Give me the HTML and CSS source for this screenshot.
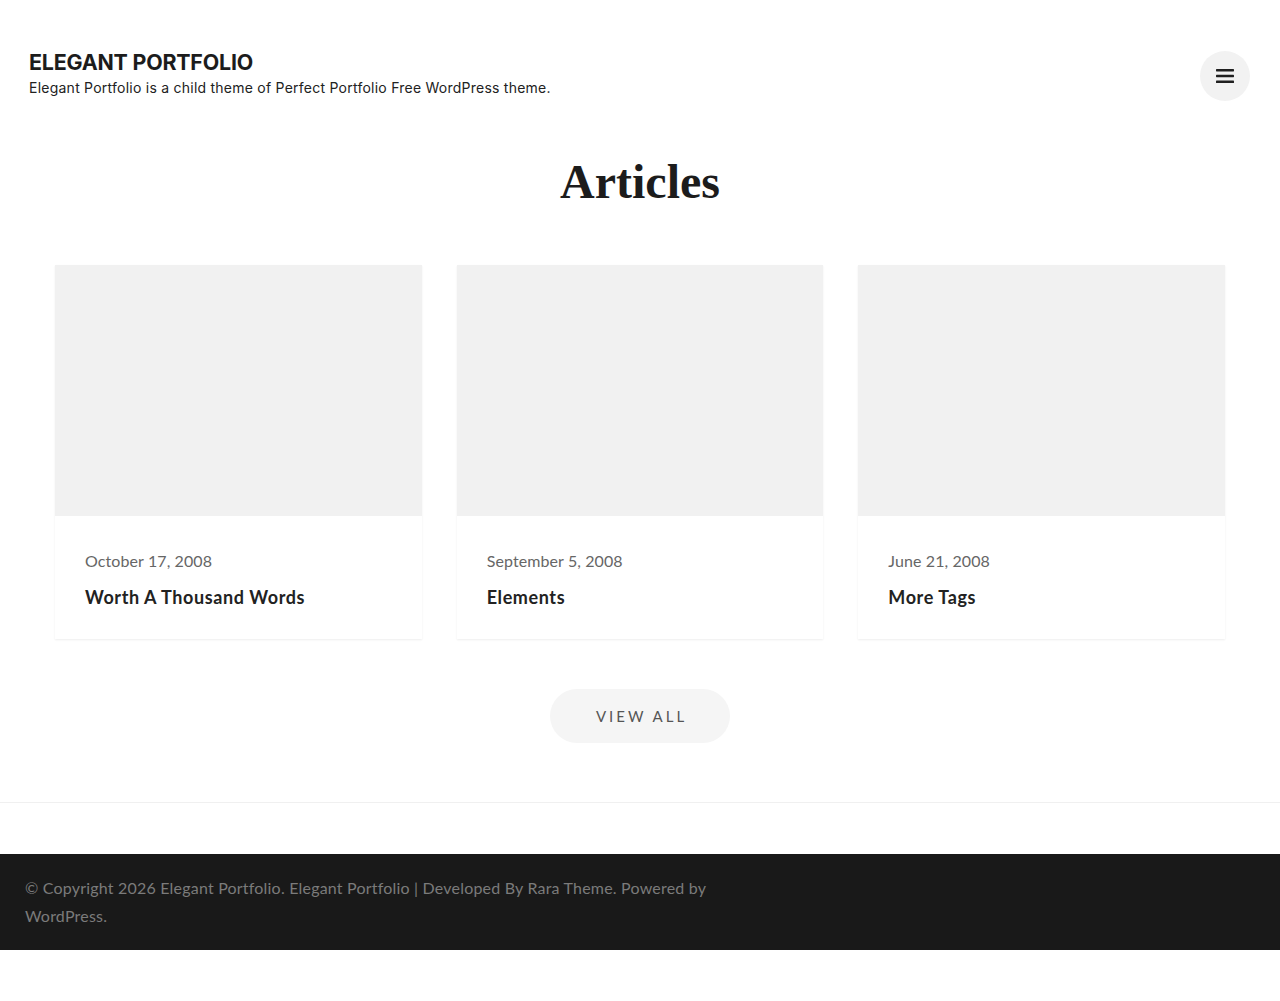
FILE: index.html
```html
<!DOCTYPE html>
<html lang="en">
<head>
<meta charset="utf-8">
<title>Elegant Portfolio</title>
<link rel="stylesheet" href="styles.css">
</head>
<body>
<header class="site-header">
  <div class="branding">
    <p class="site-title">ELEGANT PORTFOLIO</p>
    <p class="site-desc">Elegant Portfolio is a child theme of Perfect Portfolio Free WordPress theme.</p>
  </div>
  <button class="menu-btn" aria-label="Menu">
    <svg width="18" height="16" viewBox="0 0 18 16"><rect x="0" y="1" width="18" height="2.4" rx="0.6" fill="#1f1f1f"/><rect x="0" y="6.8" width="18" height="2.4" rx="0.6" fill="#1f1f1f"/><rect x="0" y="12.6" width="18" height="2.4" rx="0.6" fill="#1f1f1f"/></svg>
  </button>
</header>

<main class="articles">
  <h1 class="section-title">Articles</h1>
  <div class="grid">
    <article class="card">
      <div class="thumb"></div>
      <div class="card-body">
        <p class="date">October 17, 2008</p>
        <h2 class="post-title">Worth A Thousand Words</h2>
      </div>
    </article>
    <article class="card">
      <div class="thumb"></div>
      <div class="card-body">
        <p class="date">September 5, 2008</p>
        <h2 class="post-title">Elements</h2>
      </div>
    </article>
    <article class="card">
      <div class="thumb"></div>
      <div class="card-body">
        <p class="date">June 21, 2008</p>
        <h2 class="post-title">More Tags</h2>
      </div>
    </article>
  </div>
  <div class="btn-wrap"><a class="view-all" href="#">VIEW ALL</a></div>
</main>

<footer class="site-footer">
  <p class="copyright">© Copyright 2026 Elegant Portfolio. Elegant Portfolio | Developed By Rara Theme. Powered by WordPress.</p>
</footer>
</body>
</html>
```
FILE: styles.css
```css
* { box-sizing: border-box; }
html, body { margin: 0; padding: 0; background: #fff; }
body { font-family: "Lato", "Open Sans", sans-serif; color: #222; }
p, h1, h2 { margin: 0; }

.site-header {
  display: flex;
  justify-content: space-between;
  align-items: flex-start;
  padding: 49px 30px 0 29px;
}
.site-title {
  font-family: "Inter", "Open Sans", sans-serif;
  font-weight: 700;
  font-size: 21.4px;
  line-height: 27px;
  color: #1c1c1c;
  letter-spacing: -0.2px;
}
.site-desc {
  margin-top: 1px;
  font-family: "Inter", "Open Sans", sans-serif;
  font-size: 14px;
  letter-spacing: 0.24px;
  line-height: 22px;
  color: #222;
}
.menu-btn {
  margin-top: 2px;
  width: 50px;
  height: 50px;
  border: 0;
  border-radius: 50%;
  background: #f2f2f2;
  display: flex;
  align-items: center;
  justify-content: center;
  padding: 0;
}

.articles {
  border-bottom: 1px solid #f0f0f0;
  padding-bottom: 59px;
}
.section-title {
  margin-top: 52px;
  text-align: center;
  font-family: "Liberation Serif", "Times New Roman", serif;
  font-weight: 700;
  font-size: 48px;
  line-height: 58px;
  color: #1c1c1c;
}
.grid {
  margin: 54px auto 0;
  width: 1170px;
  display: grid;
  grid-template-columns: repeat(3, 1fr);
  column-gap: 35px;
}
.card {
  background: #fff;
  box-shadow: 0 1px 2px rgba(0,0,0,0.07);
}
.thumb {
  height: 251px;
  background: #f1f1f1;
}
.card-body {
  padding: 33px 30px 29px;
}
.date {
  font-size: 16px;
  line-height: 24px;
  letter-spacing: 0.1px;
  color: #666;
}
.post-title {
  margin-top: 12px;
  font-size: 18px;
  line-height: 25px;
  letter-spacing: 0.6px;
  font-weight: 700;
  color: #222;
}
.btn-wrap {
  margin-top: 50px;
  display: flex;
  justify-content: center;
}
.view-all {
  width: 180px;
  height: 54px;
  border-radius: 27px;
  background: #f5f5f5;
  display: flex;
  align-items: center;
  justify-content: center;
  text-decoration: none;
  color: #555;
  font-size: 15px;
  letter-spacing: 3px;
  padding-left: 3px;
}

.site-footer {
  margin-top: 51px;
  background: #191919;
  padding: 20px 25px;
}
.copyright {
  max-width: 700px;
  font-size: 16px;
  line-height: 28px;
  letter-spacing: 0.2px;
  color: #7b7b7b;
}
```
